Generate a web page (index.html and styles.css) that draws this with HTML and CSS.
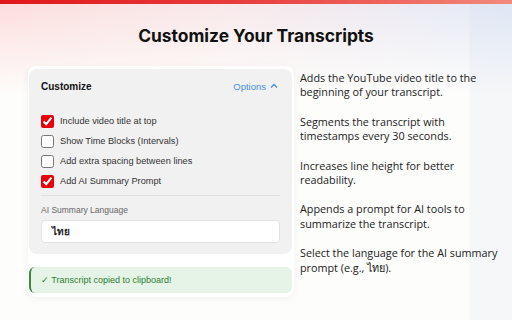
FILE: index.html
```html
<!DOCTYPE html>
<html lang="en">
<head>
    <meta charset="UTF-8">
    <meta name="viewport" content="width=device-width, initial-scale=1.0">
    <title>Customize Your Transcripts</title>
    <link rel="stylesheet" href="styles.css">
</head>
<body>
    <div class="top-bar"></div>

    <h1 class="title">Customize Your Transcripts</h1>

    <div class="main">
        <div class="card">
            <div class="panel">
                <div class="panel-header">
                    <span class="panel-title">Customize</span>
                    <span class="options">Options
                        <svg width="8" height="6" viewBox="0 0 8 6"><path d="M1 4.5 L4 1.5 L7 4.5" fill="none" stroke="#4a8fe7" stroke-width="1.4"/></svg>
                    </span>
                </div>

                <div class="option-list">
                    <label class="option"><input type="checkbox" checked> Include video title at top</label>
                    <label class="option"><input type="checkbox"> Show Time Blocks (Intervals)</label>
                    <label class="option"><input type="checkbox"> Add extra spacing between lines</label>
                    <label class="option"><input type="checkbox" checked> Add AI Summary Prompt</label>
                </div>

                <div class="divider"></div>

                <div class="field-label">AI Summary Language</div>
                <div class="field-input">ไทย</div>
            </div>

            <div class="toast">✓ Transcript copied to clipboard!</div>
        </div>

        <div class="notes">
            <p>Adds the YouTube video title to the beginning of your transcript.</p>
            <p>Segments the transcript with timestamps every 30 seconds.</p>
            <p>Increases line height for better readability.</p>
            <p>Appends a prompt for AI tools to summarize the transcript.</p>
            <p>Select the language for the AI summary prompt (e.g., ไทย).</p>
        </div>
    </div>
</body>
</html>
```

FILE: styles.css
```css
* {
    margin: 0;
    padding: 0;
    box-sizing: border-box;
}

body {
    width: 512px;
    height: 320px;
    overflow: hidden;
    font-family: 'Liberation Sans', Arial, sans-serif;
    background:
        linear-gradient(to right, transparent 469px, rgba(190, 200, 225, 0.12) 470px),
        linear-gradient(to bottom, rgba(255, 255, 255, 0) 0, #fdfdfb 95px),
        linear-gradient(to right, #fcdcdc 0%, #f8e8ea 45%, #e2eaf8 100%);
}

.top-bar {
    height: 4px;
    background: linear-gradient(to right, #e0161b 0%, #e94040 50%, #f28a7c 100%);
}

.title {
    font-family: Inter, 'Liberation Sans', sans-serif;
    font-size: 17.4px;
    font-weight: 700;
    line-height: 24px;
    color: #111;
    text-align: center;
    margin-top: 20px;
}

.main {
    display: grid;
    grid-template-columns: 266px 204px;
    gap: 6px;
    padding-left: 28px;
    margin-top: 18px;
}

.card {
    background: #fff;
    border-radius: 8px;
    padding: 3px 2px 4px 1px;
    box-shadow: 0 2px 8px rgba(0, 0, 0, 0.05);
}

.panel {
    background: #f1f1f1;
    border-radius: 8px;
    padding: 10px 12px 11px;
}

.panel-header {
    display: flex;
    justify-content: space-between;
    align-items: center;
    height: 14px;
}

.panel-title {
    font-size: 10px;
    font-weight: 700;
    color: #111;
}

.options {
    display: flex;
    align-items: center;
    gap: 4px;
    font-size: 9.5px;
    color: #4a8fe7;
    padding-right: 2px;
}

.option-list {
    margin-top: 18px;
    display: flex;
    flex-direction: column;
}

.option {
    display: flex;
    align-items: center;
    gap: 6px;
    height: 20px;
    font-size: 9.2px;
    color: #333;
}

.option input {
    width: 13px;
    height: 13px;
    margin: 0;
    accent-color: #e8000b;
}

.divider {
    height: 1px;
    background: #e0e0e0;
    margin-top: 4px;
}

.field-label {
    margin-top: 8px;
    font-size: 8.5px;
    line-height: 12px;
    color: #666;
}

.field-input {
    margin-top: 4px;
    height: 23px;
    background: #fff;
    border: 1px solid #e2e2e2;
    border-radius: 4px;
    padding-left: 10px;
    display: flex;
    align-items: center;
    font-size: 10px;
    font-weight: 700;
    color: #222;
}

.toast {
    margin-top: 13px;
    height: 26px;
    background: #e5f4e6;
    border-left: 2px solid #3a8a3e;
    border-radius: 6px;
    padding-left: 10px;
    display: flex;
    align-items: center;
    font-size: 9px;
    color: #2e7d32;
}

.notes {
    font-family: 'Open Sans', 'Noto Sans', sans-serif;
    font-size: 10.8px;
    line-height: 14.4px;
    color: #222;
    padding-top: 5px;
}

.notes p {
    margin-bottom: 15px;
}
```
